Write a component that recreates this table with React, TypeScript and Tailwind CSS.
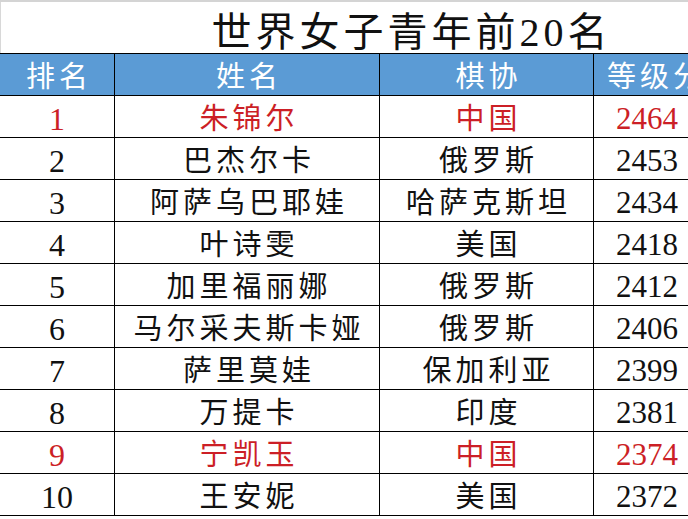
import React from "react";

const rows: [string, string, string, string, boolean][] = [
  ["1", "朱锦尔", "中国", "2464", true],
  ["2", "巴杰尔卡", "俄罗斯", "2453", false],
  ["3", "阿萨乌巴耶娃", "哈萨克斯坦", "2434", false],
  ["4", "叶诗雯", "美国", "2418", false],
  ["5", "加里福丽娜", "俄罗斯", "2412", false],
  ["6", "马尔采夫斯卡娅", "俄罗斯", "2406", false],
  ["7", "萨里莫娃", "保加利亚", "2399", false],
  ["8", "万提卡", "印度", "2381", false],
  ["9", "宁凯玉", "中国", "2374", true],
  ["10", "王安妮", "美国", "2372", false],
];

const font = { fontFamily: '"Liberation Serif", "Noto Sans CJK SC", serif' };

export default function App() {
  return (
    <div className="w-[688px] h-[519px] overflow-hidden bg-white" style={font}>
      <div className="w-[704px] border-t-2 border-[#d4d4d4]">
        <div className="grid grid-cols-[115px_589px] h-[52px] border-b border-black">
          <div className="border-l border-[#d8d8d8]" />
          <div className="flex items-center justify-center text-[40px] leading-none tracking-[4px] pl-[4px] text-[#111] pt-[10px] whitespace-nowrap">
            世界女子青年前20名
          </div>
        </div>
        <div className="grid grid-cols-[115px_265px_214px_110px] grid-rows-[41px] bg-[#5b9bd5] text-white h-[42px] border-b border-black text-[29px] leading-none tracking-[4px] whitespace-nowrap overflow-hidden">
          <div className="border-r border-black flex items-center justify-center pl-[4px] pt-[5px]">排名</div>
          <div className="border-r border-black flex items-center justify-center pl-[4px] pt-[5px]">姓名</div>
          <div className="border-r border-black flex items-center justify-center pl-[4px] pt-[5px]">棋协</div>
          <div className="flex items-center pl-[13px] pt-[5px] overflow-hidden">等级分</div>
        </div>
        {rows.map(([r, n, c, s, red]) => (
          <div
            key={r}
            className={
              "grid grid-cols-[115px_265px_214px_110px] grid-rows-[41px] h-[42px] border-b border-black text-[29px] leading-none whitespace-nowrap " +
              (red ? "text-[#cc1f26]" : "text-[#111]")
            }
          >
            <div className="border-r border-black flex items-center justify-center text-[32px] pt-[4px]">{r}</div>
            <div className="border-r border-black flex items-center justify-center tracking-[4px] pl-[4px] pt-[5px]">{n}</div>
            <div className="border-r border-black flex items-center justify-center tracking-[4px] pl-[4px] pt-[5px]">{c}</div>
            <div className="flex items-center pl-[22px] text-[31px] pt-[4px]">{s}</div>
          </div>
        ))}
      </div>
    </div>
  );
}
